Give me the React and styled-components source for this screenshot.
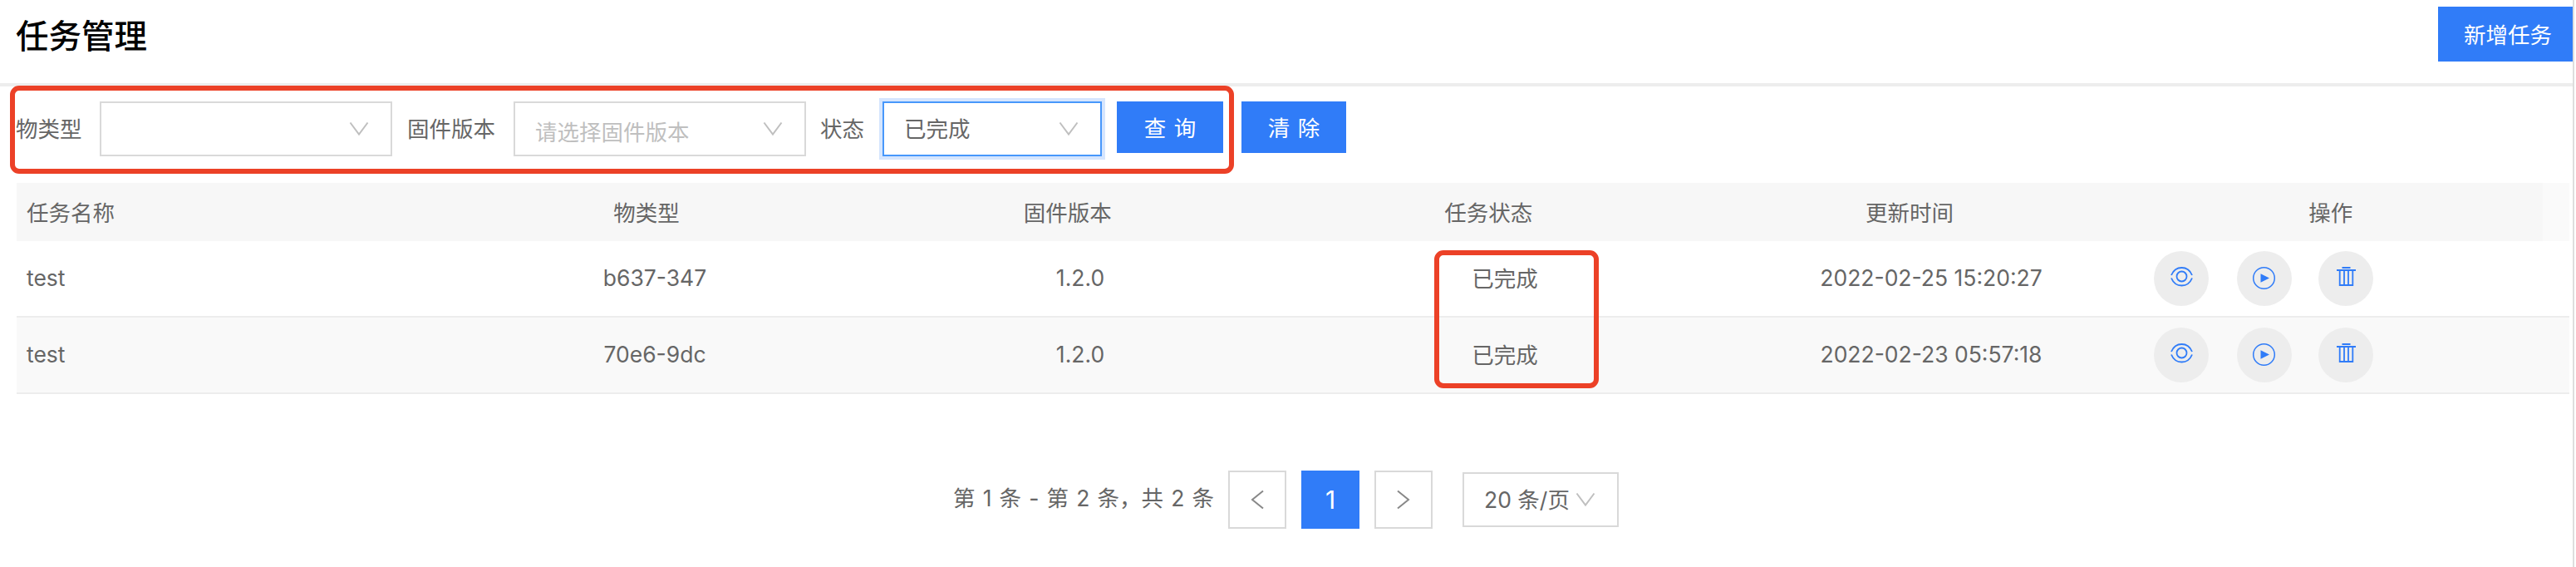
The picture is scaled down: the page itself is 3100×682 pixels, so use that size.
import React from "react";
import styled, { createGlobalStyle, css } from "styled-components";

const Global = createGlobalStyle`
  * { box-sizing: border-box; }
  html, body { margin: 0; background: #fff; overflow: hidden; }
  body { font-family: Inter, "Noto Sans CJK SC", sans-serif; font-size: 26.5px; color: #666; }
`;

const blue = "#307cf8";

const Page = styled.main`
  position: relative;
  width: 3098px;
  height: 682px;
  border-right: 2px solid #dedede;
`;

const Header = styled.header`
  display: flex;
  justify-content: space-between;
  align-items: flex-start;
  height: 104px;
  padding: 8px 0 0 19px;
  border-bottom: 4px solid #ededed;
`;

const Title = styled.h1`
  margin: 6px 0 0;
  font-size: 39.5px;
  line-height: 60px;
  font-weight: 500;
  color: #000;
`;

const Button = styled.button`
  display: flex;
  align-items: center;
  justify-content: center;
  width: ${(p) => p.$width}px;
  height: ${(p) => p.$height || 62}px;
  margin: 0 0 0 ${(p) => p.$gap || 0}px;
  padding: 2px 0 0 ${(p) => p.$indent || 0}px;
  border: 0;
  background: ${blue};
  color: #fff;
  font: inherit;
  word-spacing: 2px;
  line-height: 40px;
`;

const Filters = styled.form`
  display: flex;
  align-items: flex-start;
  height: 116px;
  padding: 18px 0 0 19px;
`;

const Label = styled.label`
  width: ${(p) => p.$width}px;
  line-height: 66px;
  white-space: nowrap;
`;

const SelectBox = styled.div`
  display: flex;
  align-items: center;
  justify-content: space-between;
  width: ${(p) => p.$width}px;
  height: 66px;
  margin-right: ${(p) => p.$gap || 0}px;
  padding: 0 26px 0 24px;
  border: 2px solid #d9d9d9;
  line-height: 62px;
  white-space: nowrap;
  ${(p) => p.$focused && css`
    border-color: #4797fb;
    box-shadow: 0 0 0 4px #d5e5fe;
  `}
`;

const Value = styled.span`
  color: ${(p) => (p.$placeholder ? "#bfbfbf" : "#666")};
  padding-top: ${(p) => (p.$placeholder ? 7 : 0)}px;
`;

const Table = styled.section`
  margin-left: 20px;
  width: 3072px;
`;

const HeadRow = styled.div`
  display: grid;
  grid-template-columns: repeat(6, 1fr);
  height: 70px;
  padding-right: 32px;
  background: linear-gradient(to right, #f7f7f7 3040px, #fafafa 3040px);
`;

const Row = styled.div`
  display: grid;
  grid-template-columns: repeat(6, 512px);
  height: 92px;
  border-bottom: 2px solid #ededed;
  background: ${(p) => (p.$striped ? "#f9f9f9" : "#fff")};
`;

const Cell = styled.div`
  display: flex;
  align-items: center;
  justify-content: ${(p) => (p.$left ? "flex-start" : "center")};
  padding: 0 ${(p) => p.$inset || 0}px ${(p) => p.$raise || 2}px ${(p) => (p.$left ? 12 : 0)}px;
  white-space: nowrap;
`;

const Actions = styled.div`
  display: flex;
  align-items: center;
  padding-left: 12px;
`;

const RoundButton = styled.button`
  display: block;
  width: 66px;
  height: 66px;
  margin: 0 ${(p) => p.$gap}px 0 0;
  padding: 0;
  border: 0;
  border-radius: 50%;
  background: #ededed;
  color: ${blue};
  svg { display: block; }
`;

const Pagination = styled.nav`
  display: flex;
  align-items: center;
  height: 70px;
  margin: 92px 0 0 1147px;
`;

const Total = styled.span`
  width: 331px;
  white-space: nowrap;
  line-height: 64px;
  padding-bottom: 4px;
  word-spacing: 1.7px;
`;

const PageItem = styled.button`
  display: flex;
  align-items: center;
  justify-content: center;
  width: 70px;
  height: 70px;
  margin: 0 ${(p) => p.$gap}px 0 0;
  padding: 0;
  border: 2px solid ${(p) => (p.$active ? blue : "#d9d9d9")};
  background: ${(p) => (p.$active ? blue : "#fff")};
  color: ${(p) => (p.$active ? "#fff" : "#888")};
  font: inherit;
  font-size: 30px;
`;

const Highlight = styled.div`
  position: absolute;
  left: ${(p) => p.$x}px;
  top: ${(p) => p.$y}px;
  width: ${(p) => p.$w}px;
  height: ${(p) => p.$h}px;
  border: 6px solid #ec4127;
  border-radius: 11px;
  pointer-events: none;
`;

const Down = () => (
  <svg width="24" height="18" viewBox="0 0 24 18" fill="none" stroke="#bfbfbf" strokeWidth="2">
    <path d="M1.5 1.5 12 15.5 22.5 1.5" />
  </svg>
);

const Arrow = ({ next }) => (
  <svg width="18" height="24" viewBox="0 0 18 24" fill="none" stroke="currentColor" strokeWidth="2">
    <path d={next ? "M2 1.5 15 12 2 22.5" : "M16 1.5 3 12 16 22.5"} />
  </svg>
);

const EyeIcon = () => (
  <svg width="66" height="66" viewBox="0 0 66 66" fill="none" stroke="currentColor" strokeWidth="1.8">
    <circle cx="33.5" cy="30.5" r="6" />
    <path d="M21 29C23.5 23 28 20 33.5 20S43.5 23 46 29M21 32.5C23.5 38.5 28 41.5 33.5 41.5S43.5 38.5 46 32.5" />
  </svg>
);

const PlayIcon = () => (
  <svg width="66" height="66" viewBox="0 0 66 66" fill="none" stroke="currentColor" strokeWidth="1.5">
    <circle cx="32.5" cy="32.5" r="12.8" />
    <path d="M28.5 27.3 39 32.5 28.5 37.7Z" fill="currentColor" stroke="none" />
  </svg>
);

const TrashIcon = () => (
  <svg width="66" height="66" viewBox="0 0 66 66" fill="none" stroke="currentColor" strokeWidth="1.8">
    <path d="M28.5 20H38.5M22 23H45M25.7 23V41H41.3V23M31 23V41M36 23V41" />
  </svg>
);

const heads = ["任务名称", "物类型", "固件版本", "任务状态", "更新时间", "操作"];
const tasks = [
  ["test", "b637-347", "1.2.0", "已完成", "2022-02-25 15:20:27"],
  ["test", "70e6-9dc", "1.2.0", "已完成", "2022-02-23 05:57:18"],
];

export default function App() {
  return (
    <>
      <Global />
      <Page>
        <Header>
          <Title>任务管理</Title>
          <Button $width={162} $height={66} $indent={6}>新增任务</Button>
        </Header>
        <Filters>
          <Label $width={101}>物类型</Label>
          <SelectBox $width={352} $gap={18}><Value /><Down /></SelectBox>
          <Label $width={128}>固件版本</Label>
          <SelectBox $width={352} $gap={17}><Value $placeholder>请选择固件版本</Value><Down /></SelectBox>
          <Label $width={75}>状态</Label>
          <SelectBox $width={264} $focused><Value>已完成</Value><Down /></SelectBox>
          <Button type="button" $width={128} $gap={18}>查 询</Button>
          <Button type="button" $width={126} $gap={22}>清 除</Button>
        </Filters>
        <Table>
          <HeadRow>{heads.map((h, i) => <Cell key={h} $left={i === 0} $inset={4}>{h}</Cell>)}</HeadRow>
          {tasks.map((task, r) => (
            <Row key={r} $striped={r === 1}>
              {task.map((t, i) => <Cell key={i} $left={i === 0} $inset={i === 3 ? 2 : 0} $raise={i === 3 ? 4 : 2}>{t}</Cell>)}
              <Actions>
                <RoundButton $gap={34}><EyeIcon /></RoundButton>
                <RoundButton $gap={32}><PlayIcon /></RoundButton>
                <RoundButton $gap={0}><TrashIcon /></RoundButton>
              </Actions>
            </Row>
          ))}
        </Table>
        <Pagination>
          <Total>第 1 条 - 第 2 条，共 2 条</Total>
          <PageItem $gap={18}><Arrow /></PageItem>
          <PageItem $gap={18} $active>1</PageItem>
          <PageItem $gap={36}><Arrow next /></PageItem>
          <SelectBox $width={188}><Value>20 条/页</Value><Down /></SelectBox>
        </Pagination>
        <Highlight $x={12} $y={103} $w={1473} $h={106} />
        <Highlight $x={1726} $y={301} $w={198} $h={166} />
      </Page>
    </>
  );
}
